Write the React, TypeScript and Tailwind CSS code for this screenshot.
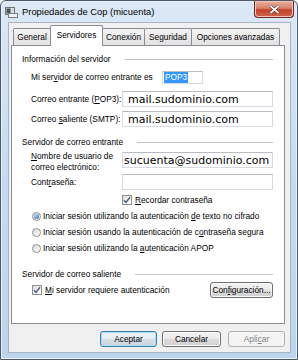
import type { ReactNode } from "react";

function U({ children }: { children: ReactNode }) {
  return <span className="underline underline-offset-[1px]">{children}</span>;
}

function Check() {
  return (
    <span className="flex h-[10px] w-[10px] shrink-0 items-center justify-center border border-[#8e8f8f] bg-linear-to-br from-[#dcdcdc] to-white">
      <svg width="8" height="8" viewBox="0 0 8 8">
        <path d="M1 4.2 L3 6.4 L7 1.3" fill="none" stroke="#4b6090" strokeWidth="1.4" />
      </svg>
    </span>
  );
}

function Radio({ on }: { on?: boolean }) {
  return (
    <span className="flex h-[9px] w-[9px] shrink-0 items-center justify-center rounded-full border border-[#8e8f8f] bg-linear-to-br from-[#d8d8d8] to-white">
      {on && (
        <span className="h-[5px] w-[5px] rounded-full bg-[radial-gradient(circle_at_35%_35%,#a8dcff,#1f5ca6)]" />
      )}
    </span>
  );
}

function Header({ text }: { text: string }) {
  return (
    <div className="flex h-[12px] items-center">
      <span>{text}</span>
      <span className="ml-[14px] h-px flex-1 bg-[#c0c4c8]" />
    </div>
  );
}

function Field({ value, tight }: { value?: string; tight?: boolean }) {
  return (
    <div
      className={
        "flex h-[16px] w-[151px] items-center border border-[#d7dae0] border-t-[#b9bcc3] bg-white font-['DejaVu_Sans',sans-serif] text-[11px] leading-none " +
        (tight ? "pl-[1px]" : "pl-[5px]")
      }
    >
      {value}
    </div>
  );
}

function Tab({ label, active, w }: { label: string; active?: boolean; w: string }) {
  if (active)
    return (
      <div
        className={`relative z-10 -mb-px -ml-px flex h-[21px] items-start justify-center rounded-t-[2px] border border-b-0 border-[#898c95] bg-white pt-[4px] ${w}`}
      >
        {label}
      </div>
    );
  return (
    <div
      className={`-ml-px flex h-[17px] items-center justify-center rounded-t-[2px] border border-b-0 border-[#898c95] bg-linear-to-b from-[#f3f3f3] to-[#e2e2e2] pt-[1px] ${w}`}
    >
      {label}
    </div>
  );
}

function Btn({ children, kind, w }: { children: ReactNode; kind?: "default" | "disabled"; w: string }) {
  const base = `flex h-[16px] items-center justify-center rounded-[3px] border ${w} `;
  if (kind === "default")
    return (
      <div className={base + "border-[#3c7fb1] bg-[linear-gradient(#eef4f8_0%,#e6edf2_49%,#d6dfe6_50%,#cbd6de_100%)] shadow-[inset_0_0_0_1px_#a9dcf6]"}>
        {children}
      </div>
    );
  if (kind === "disabled")
    return <div className={base + "border-[#adb2b5] bg-[#f4f4f4] text-[#838383]"}>{children}</div>;
  return (
    <div className={base + "border-[#707070] bg-[linear-gradient(#f2f2f2_0%,#ebebeb_49%,#dddddd_50%,#cfcfcf_100%)] shadow-[inset_0_0_0_1px_#fbfbfb]"}>
      {children}
    </div>
  );
}

export default function App() {
  return (
    <div className="h-[360px] w-[298px] font-['Liberation_Sans',Arial,sans-serif] text-[8.3px] leading-[11px] text-black">
      <div className="flex h-full flex-col rounded-t-[6px] border border-[#4a5868] bg-linear-to-b from-[#dbe8f6] via-[#c6dbf1] to-[#bcd4ed] shadow-[inset_0_0_0_1px_#e9f2fb]">
        {/* title bar */}
        <div className="flex h-[21px] shrink-0 items-start">
          <svg className="ml-[4px] mt-[6px]" width="13" height="11" viewBox="0 0 13 11">
            <rect x="0.5" y="0.5" width="9" height="7" fill="#d9dcdf" stroke="#6d7378" />
            <rect x="1.5" y="1.5" width="4" height="5" fill="#4c5257" />
            <rect x="3.5" y="6.5" width="9" height="4" fill="#eef0f1" stroke="#7a8086" />
          </svg>
          <div className="ml-[4px] mt-[5px] text-[9.4px] leading-[12px]">Propiedades de Cop (micuenta)</div>
          <div className="ml-auto mr-[3px] flex h-[17px] w-[40px] items-center justify-center rounded-b-[4px] border border-t-0 border-[#6b2b22] bg-[linear-gradient(#eab1a2_0%,#d9826b_45%,#c4432b_55%,#d0654c_100%)] shadow-[inset_0_0_0_1px_#f1c2b5]">
            <svg width="11" height="9" viewBox="0 0 11 9">
              <path d="M1.5 1 L9.5 8 M9.5 1 L1.5 8" stroke="#5a2a22" strokeWidth="3" />
              <path d="M1.5 1 L9.5 8 M9.5 1 L1.5 8" stroke="white" strokeWidth="1.7" />
            </svg>
          </div>
        </div>

        {/* client area */}
        <div className="mb-[6px] ml-[7px] mr-[6px] flex flex-1 flex-col border border-[#a7b5c3] bg-[#f0f0f0] pl-[2px] pr-[5px] pt-[3px]">
          <div className="relative z-10 ml-[2px] flex h-[19px] items-end">
            <Tab label="General" w="w-[38px] ml-0" />
            <Tab label="Servidores" w="w-[53px]" active />
            <Tab label="Conexión" w="w-[43px]" />
            <Tab label="Seguridad" w="w-[48px]" />
            <Tab label="Opciones avanzadas" w="w-[89px]" />
          </div>

          <div className="flex h-[279px] w-[274px] flex-col border border-[#898c95] bg-white pl-[10px] pr-[11px]">
            <div className="mt-[7px]">
              <Header text="Información del servidor" />
            </div>

            <div className="mt-[6px] flex h-[13px] items-center pl-[9px]">
              <span className="w-[131px]">
                Mi ser<U>v</U>idor de correo entrante es
              </span>
              <span className="flex h-[13px] w-[41px] items-center border border-[#d7dae0] border-t-[#b9bcc3] pl-[1px]">
                <span className="bg-[#3399ff] px-[1px] text-white">POP3</span>
              </span>
            </div>

            <div className="mt-[7px] flex h-[16px] items-center pl-[9px]">
              <span className="w-[91px]">
                Correo entrante (<U>P</U>OP3):
              </span>
              <Field value="mail.sudominio.com" />
            </div>

            <div className="mt-[4px] flex h-[16px] items-center pl-[9px]">
              <span className="w-[91px]">
                Correo <U>s</U>aliente (SMTP):
              </span>
              <Field value="mail.sudominio.com" />
            </div>

            <div className="mt-[9px]">
              <Header text="Servidor de correo entrante" />
            </div>

            <div className="mt-[3px] flex items-start pl-[9px]">
              <span className="w-[91px]">
                <U>N</U>ombre de usuario de
                <br />
                correo electrónico:
              </span>
              <div className="mt-px">
                <Field value="sucuenta@sudominio.com" tight />
              </div>
            </div>

            <div className="mt-[1px] flex h-[16px] items-center pl-[9px]">
              <span className="w-[91px]">
                Cont<U>r</U>aseña:
              </span>
              <Field />
            </div>

            <div className="mt-[4px] flex h-[12px] items-center gap-[3px] pl-[100px]">
              <Check />
              <span>
                <U>R</U>ecordar contraseña
              </span>
            </div>

            <div className="mt-[4px] flex h-[12px] items-center gap-[2px] pl-[10px]">
              <Radio on />
              <span>
                Iniciar sesión utilizando la autenticación <U>d</U>e texto no cifrado
              </span>
            </div>
            <div className="mt-[4px] flex h-[12px] items-center gap-[2px] pl-[10px]">
              <Radio />
              <span>
                Iniciar sesión usando la autenticación de c<U>o</U>ntraseña segura
              </span>
            </div>
            <div className="mt-[4px] flex h-[12px] items-center gap-[2px] pl-[10px]">
              <Radio />
              <span>
                Iniciar sesión utilizando la <U>a</U>utenticación APOP
              </span>
            </div>

            <div className="mt-[14px]">
              <Header text="Servidor de correo saliente" />
            </div>

            <div className="mt-[2px] flex h-[16px] items-center pl-[10px]">
              <Check />
              <span className="ml-[3px]">
                <U>M</U>i servidor requiere autenticación
              </span>
              <div className="ml-auto">
                <Btn w="w-[63px]">
                  Con<U>f</U>iguración...
                </Btn>
              </div>
            </div>
          </div>

          <div className="mt-[7px] flex justify-end">
            <Btn kind="default" w="w-[57px]">
              Aceptar
            </Btn>
            <div className="ml-[5px]">
              <Btn w="w-[59px]">Cancelar</Btn>
            </div>
            <div className="ml-[7px]">
              <Btn kind="disabled" w="w-[57px]">
                Apli<U>c</U>ar
              </Btn>
            </div>
          </div>
        </div>
      </div>
    </div>
  );
}
